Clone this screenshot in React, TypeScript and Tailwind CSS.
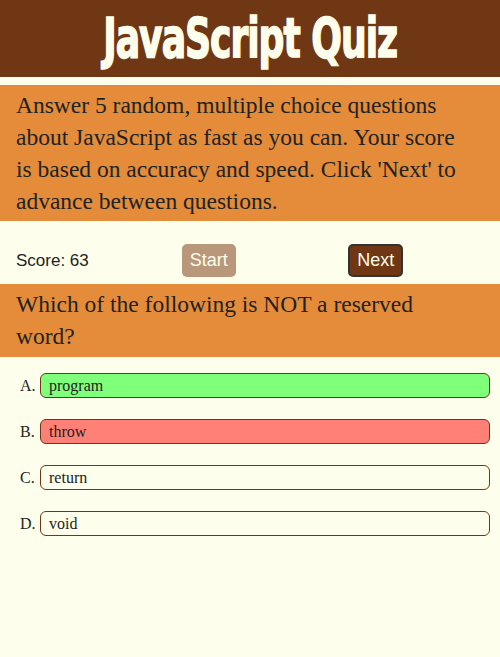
import React from 'react';

const options = [
  { label: 'A.', text: 'program', state: 'correct' },
  { label: 'B.', text: 'throw', state: 'wrong' },
  { label: 'C.', text: 'return', state: 'none' },
  { label: 'D.', text: 'void', state: 'none' },
];

export default function App() {
  return (
    <div className="min-h-[657px] bg-[#fefeec] text-[#222] font-['Liberation_Serif',serif]">
      {/* Header */}
      <header className="h-[77px] bg-[#6f3714] flex items-center justify-center">
        <h1 className="text-[#fefeec] text-[55px] font-bold tracking-tight leading-none scale-x-[0.73] [-webkit-text-stroke:1.5px_#fefeec] font-['DejaVu_Sans_Condensed','DejaVu_Sans',sans-serif]">
          JavaScript Quiz
        </h1>
      </header>

      {/* Intro */}
      <div className="mt-2 bg-[#e48c3a] pl-4 pr-8 py-1 text-[23.5px] leading-[32px]">
        Answer 5 random, multiple choice questions about JavaScript as fast as you can. Your score is based on accuracy and speed. Click 'Next' to advance between questions.
      </div>

      {/* Controls */}
      <div className="grid grid-cols-3 items-center pt-[23px] pb-[7px] font-['Liberation_Sans',Arial,sans-serif]">
        <div className="pl-4 text-[17px]">Score: 63</div>
        <div className="pl-[15px]">
          <button className="h-[33px] px-2 rounded-[5px] bg-[#b9977a] text-[#fefeec] text-[18px]">Start</button>
        </div>
        <div className="pl-[15px]">
          <button className="h-[33px] px-[7px] rounded-[5px] border-2 border-[#333] bg-[#6f3714] text-[#fefeec] text-[18px]">Next</button>
        </div>
      </div>

      {/* Question */}
      <div className="bg-[#e48c3a] pl-4 pr-8 pt-1 pb-[5px] text-[23.5px] leading-[32px]">
        Which of the following is NOT a reserved word?
      </div>

      {/* Options */}
      <div className="flex flex-col gap-[21px] pt-4 pl-5 pr-[10px]">
        {options.map((o) => (
          <div key={o.label} className="flex items-center text-[16px]">
            <span className="w-5 shrink-0">{o.label}</span>
            <div
              className={
                'flex-1 h-[25px] flex items-center px-2 rounded-[6px] border border-[#6f3714] ' +
                (o.state === 'correct' ? 'bg-[#80ff7a]' : o.state === 'wrong' ? 'bg-[#ff8077]' : 'bg-[#fefeec]')
              }
            >
              {o.text}
            </div>
          </div>
        ))}
      </div>
    </div>
  );
}
